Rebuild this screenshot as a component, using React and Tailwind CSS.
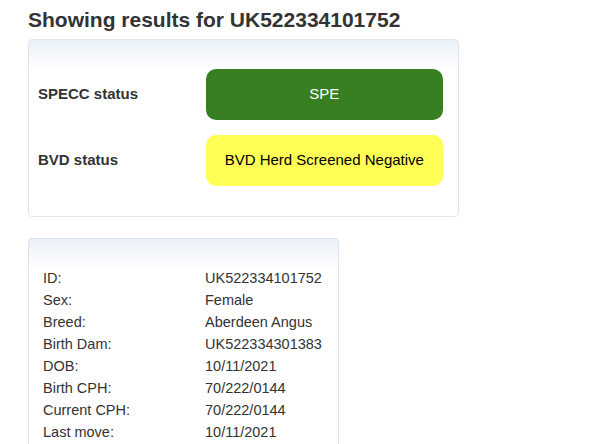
export default function App() {
  const details = [
    ["ID:", "UK522334101752"],
    ["Sex:", "Female"],
    ["Breed:", "Aberdeen Angus"],
    ["Birth Dam:", "UK522334301383"],
    ["DOB:", "10/11/2021"],
    ["Birth CPH:", "70/222/0144"],
    ["Current CPH:", "70/222/0144"],
    ["Last move:", "10/11/2021"],
  ];
  return (
    <div className="min-h-screen bg-white text-[#333] font-['Liberation_Sans',Arial,sans-serif] pl-[28px] pt-[8px]">
      <h1 className="text-[21px] font-bold leading-[24px]">Showing results for UK522334101752</h1>

      <div className="mt-[7px] w-[431px] rounded-[4px] border border-[#dfe5ec] bg-gradient-to-b from-[#eaf0f8] to-white to-[30px] pt-[29px] pb-[30px] pl-[9px] pr-[15px]">
        <div className="flex items-center">
          <div className="w-[168px] text-[15px] font-bold">SPECC status</div>
          <div className="flex h-[51px] w-[238px] items-center justify-center rounded-[10px] bg-[#377f22] text-[15px] text-white">SPE</div>
        </div>
        <div className="mt-[15px] flex items-center">
          <div className="w-[168px] text-[15px] font-bold">BVD status</div>
          <div className="flex h-[51px] w-[238px] items-center justify-center rounded-[10px] bg-[#ffff55] text-[15px] text-black">BVD Herd Screened Negative</div>
        </div>
      </div>

      <div className="mt-[21px] w-[311px] rounded-t-[4px] border border-b-0 border-[#dfe5ec] bg-gradient-to-b from-[#eaf0f8] to-white to-[30px] pt-[28px] pl-[14px] pb-[10px]">
        {details.map(([k, v]) => (
          <div key={k} className="flex text-[14.5px] leading-[22px]">
            <div className="w-[162px]">{k}</div>
            <div>{v}</div>
          </div>
        ))}
      </div>
    </div>
  );
}
